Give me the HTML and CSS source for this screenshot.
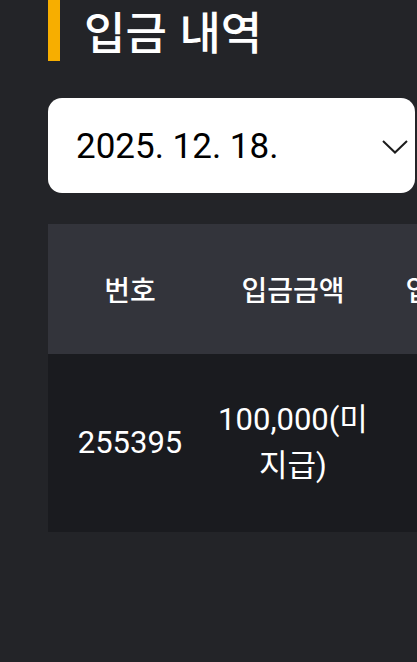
FILE: index.html
```html
<!DOCTYPE html>
<html lang="ko">
<head>
<meta charset="utf-8">
<link rel="stylesheet" href="styles.css">
</head>
<body>
<main class="page">
  <h1 class="title">입금 내역</h1>
  <div class="date-select">
    <span class="date-text">2025. 12. 18.</span>
    <svg class="chevron" width="26" height="14" viewBox="0 0 26 14"><path d="M1 1 L13 12.5 L25 1" fill="none" stroke="#1c1c1c" stroke-width="2"/></svg>
  </div>
  <div class="table-wrap">
    <table class="deposits">
      <colgroup><col class="c1"><col class="c2"><col class="c3"></colgroup>
      <thead>
        <tr><th>번호</th><th>입금금액</th><th>입금일시</th></tr>
      </thead>
      <tbody>
        <tr><td>255395</td><td>100,000(미지급)</td><td>-</td></tr>
      </tbody>
    </table>
  </div>
</main>
</body>
</html>
```
FILE: styles.css
```css
* { box-sizing: border-box; }
html, body { margin: 0; padding: 0; }
body {
  background: #232428;
  color: #fff;
  font-family: Roboto, "Noto Sans CJK KR", sans-serif;
  width: 417px;
  height: 662px;
  overflow: hidden;
}
.page {
  padding-left: 48px;
}
.title {
  margin: 0;
  height: 61px;
  border-left: 12px solid #f7ae00;
  padding-left: 24px;
  display: flex;
  align-items: center;
  font-size: 45px;
  line-height: 1;
  font-weight: 500;
  font-family: "Noto Sans CJK KR", sans-serif;
}
.date-select {
  margin-top: 37px;
  width: 367px;
  height: 95px;
  background: #fff;
  border-radius: 14px;
  display: flex;
  align-items: center;
  justify-content: space-between;
  padding: 2px 7px 0 28px;
  color: #000;
}
.date-text {
  font-size: 35px;
  font-weight: 400;
}
.chevron { display: block; }
.table-wrap {
  margin-top: 31px;
  width: 369px;
  overflow: hidden;
}
.deposits {
  border-collapse: collapse;
  table-layout: fixed;
  width: 492px;
}
.c1 { width: 164px; }
.c2 { width: 162px; }
.c3 { width: 166px; }
.deposits th {
  background: #33343b;
  height: 130px;
  font-family: "Noto Sans CJK KR", sans-serif;
  font-size: 28px;
  font-weight: 500;
  text-align: center;
  padding: 0;
}
.deposits td {
  background: #1a1b1f;
  height: 178px;
  font-size: 31px;
  line-height: 46px;
  text-align: center;
  padding: 0;
  vertical-align: middle;
}
```
